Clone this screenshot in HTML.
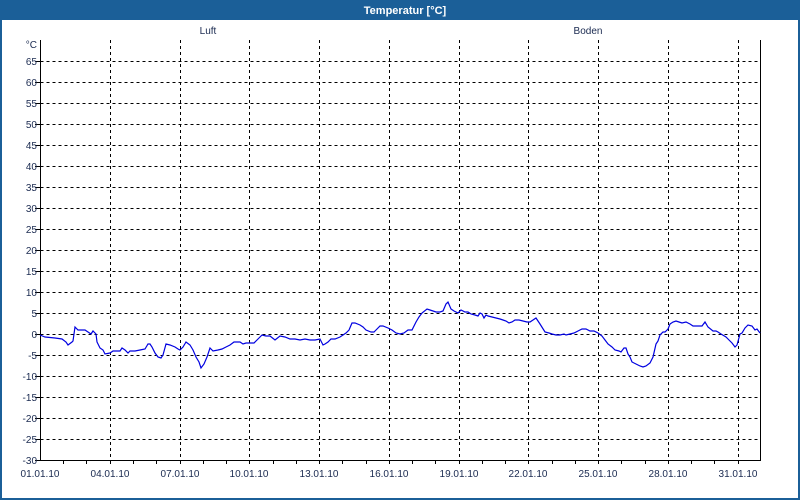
<!DOCTYPE html>
<html><head><meta charset="utf-8"><style>
html,body{margin:0;padding:0;background:#fff}
#w{position:relative;width:800px;height:500px;overflow:hidden;font-family:"Liberation Sans",sans-serif}
</style></head><body><div id="w">
<svg width="800" height="500" xmlns="http://www.w3.org/2000/svg" font-family="Liberation Sans, sans-serif" font-size="10">
<rect x="0" y="0" width="800" height="500" fill="#fff"/>
<rect x="0" y="0" width="800" height="20" fill="#1b5f98"/>
<rect x="0" y="0" width="2" height="500" fill="#1b5f98"/>
<rect x="798" y="0" width="2" height="500" fill="#1b5f98"/>
<rect x="0" y="498" width="800" height="2" fill="#1b5f98"/>
<text x="405" y="14" fill="#fff" font-weight="bold" font-size="11" text-anchor="middle">Temperatur [°C]</text>
<text x="208" y="34" fill="#1a2a50" text-anchor="middle">Luft</text>
<text x="588" y="34" fill="#1a2a50" text-anchor="middle">Boden</text>
<g stroke="#000" stroke-width="1" stroke-dasharray="3,3" shape-rendering="crispEdges">
<path d="M40.5 61.5H760M40.5 82.5H760M40.5 103.5H760M40.5 124.5H760M40.5 145.5H760M40.5 166.5H760M40.5 187.5H760M40.5 208.5H760M40.5 229.5H760M40.5 250.5H760M40.5 271.5H760M40.5 292.5H760M40.5 313.5H760M40.5 334.5H760M40.5 355.5H760M40.5 376.5H760M40.5 397.5H760M40.5 418.5H760M40.5 439.5H760"/>
<path d="M110.5 40V460M180.5 40V460M249.5 40V460M319.5 40V460M389.5 40V460M459.5 40V460M528.5 40V460M598.5 40V460M668.5 40V460M738.5 40V460"/>
</g>
<g stroke="#000" stroke-width="1" shape-rendering="crispEdges" fill="none">
<path d="M40.5 40V460.5H760.5V40"/>
<path d="M63.5 460v4M86.5 460v4M110.5 460v4M133.5 460v4M156.5 460v4M180.5 460v4M203.5 460v4M226.5 460v4M249.5 460v4M273.5 460v4M296.5 460v4M319.5 460v4M342.5 460v4M366.5 460v4M389.5 460v4M412.5 460v4M435.5 460v4M459.5 460v4M482.5 460v4M505.5 460v4M528.5 460v4M552.5 460v4M575.5 460v4M598.5 460v4M621.5 460v4M645.5 460v4M668.5 460v4M691.5 460v4M714.5 460v4M738.5 460v4M35 61.5h5M35 82.5h5M35 103.5h5M35 124.5h5M35 145.5h5M35 166.5h5M35 187.5h5M35 208.5h5M35 229.5h5M35 250.5h5M35 271.5h5M35 292.5h5M35 313.5h5M35 334.5h5M35 355.5h5M35 376.5h5M35 397.5h5M35 418.5h5M35 439.5h5M35 460.5h5"/>
</g>
<g fill="#1a2a50" text-anchor="end">
<text x="37" y="48">°C</text>
<text x="37" y="65">65</text><text x="37" y="86">60</text><text x="37" y="107">55</text><text x="37" y="128">50</text><text x="37" y="149">45</text><text x="37" y="170">40</text><text x="37" y="191">35</text><text x="37" y="212">30</text><text x="37" y="233">25</text><text x="37" y="254">20</text><text x="37" y="275">15</text><text x="37" y="296">10</text><text x="37" y="317">5</text><text x="37" y="338">0</text><text x="37" y="359">-5</text><text x="37" y="380">-10</text><text x="37" y="401">-15</text><text x="37" y="422">-20</text><text x="37" y="443">-25</text><text x="37" y="464">-30</text>
</g>
<g fill="#1a2a50" text-anchor="middle">
<text x="40" y="477">01.01.10</text><text x="110" y="477">04.01.10</text><text x="180" y="477">07.01.10</text><text x="249" y="477">10.01.10</text><text x="319" y="477">13.01.10</text><text x="389" y="477">16.01.10</text><text x="459" y="477">19.01.10</text><text x="528" y="477">22.01.10</text><text x="598" y="477">25.01.10</text><text x="668" y="477">28.01.10</text><text x="738" y="477">31.01.10</text>
</g>
<polyline fill="none" stroke="#0000e0" stroke-width="1.2" points="40,335 45,337 55,338 62,339 66,342 68,345 72,342 73,341 75,327 78,330 85,330 88,332 91,334 93,331 96,334 97,342 100,348 103,350 105,354 110,353 113,351 117,351 120,351 122,348 125,350 128,353 130,351 135,351 140,350 145,349 148,344 150,344 152,347 155,353 158,357 161,358 163,355 166,344 170,345 175,347 178,349 180,350 183,347 186,342 190,345 193,350 196,357 199,362 201,368 204,364 207,357 210,348 213,351 218,350 222,349 226,347 230,345 234,342 240,342 243,344 246,343 249,343 254,343 257,340 262,335 266,336 270,336 275,340 280,336 285,337 290,339 295,339 300,340 305,339 310,340 315,340 320,339 323,345 325,344 328,342 331,339 335,339 340,337 343,335 346,333 349,330 352,323 355,323 360,325 363,327 366,330 371,332 374,332 377,329 380,326 383,326 388,328 392,330 396,333 400,334 404,333 408,330 412,330 416,322 419,317 422,313 427,309 430,310 436,312 440,312 443,311 446,304 448,302 451,309 454,311 458,313 461,310 465,312 468,312 471,314 475,315 478,316 480,313 482,314 484,318 486,315 488,316 492,317 496,318 500,319 503,320 506,321 509,323 512,322 515,320 519,320 523,321 527,322 530,322 533,320 536,318 538,321 540,324 545,332 549,333 552,334 556,335 560,335 564,334 566,335 570,334 574,333 578,331 582,329 586,329 590,331 594,331 598,333 602,336 605,340 608,344 612,347 615,350 619,351 621,352 624,348 626,348 628,354 630,357 632,362 636,364 640,366 643,367 646,366 650,363 653,357 656,344 658,341 660,335 663,332 665,332 668,329 670,324 673,322 676,321 679,322 682,323 686,322 690,324 693,326 696,326 700,326 702,326 705,322 708,327 713,331 716,331 718,332 721,334 726,337 729,340 732,343 735,347 737,345 740,334 742,333 745,328 748,325 752,326 755,330 757,329 760,333"/>
</svg>
</div></body></html>
